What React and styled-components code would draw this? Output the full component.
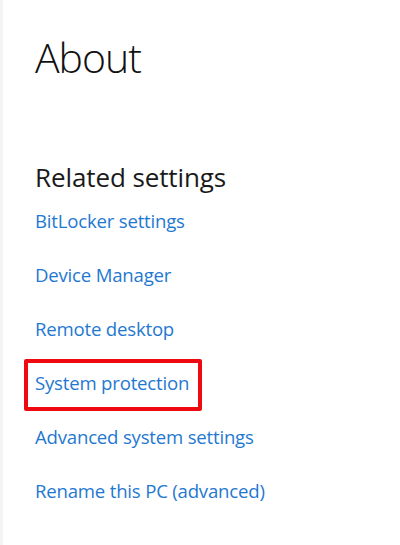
import React from "react";
import styled, { createGlobalStyle } from "styled-components";

const Global = createGlobalStyle`
  html, body { margin: 0; padding: 0; background: #ffffff; }
  body { font-family: "Open Sans", "Noto Sans", sans-serif; }
`;

const Page = styled.div`
  width: 400px;
  height: 545px;
  box-sizing: border-box;
  background: #ffffff;
  border-left: 3px solid #f4f4f2;
  padding: 31px 0 0 32px;
  display: flex;
  flex-direction: column;
`;

const Title = styled.h1`
  margin: 0;
  font-weight: 300;
  font-size: 41px;
  line-height: 52px;
  color: #111111;
  letter-spacing: -1px;
`;

const Section = styled.section`
  margin-top: 79px;
  display: flex;
  flex-direction: column;
`;

const SectionTitle = styled.h2`
  margin: 0;
  font-weight: 400;
  font-size: 26px;
  line-height: 30px;
  color: #1a1a1a;
  letter-spacing: -0.1px;
`;

const LinkList = styled.ul`
  list-style: none;
  margin: 17px 0 0 0;
  padding: 0;
  display: flex;
  flex-direction: column;
  gap: 30px;
`;

const LinkItem = styled.li`
  position: relative;
  height: 24px;
  display: flex;
  align-items: center;
`;

const Link = styled.a`
  font-size: 18.6px;
  font-weight: 400;
  color: #1f78d1;
  text-decoration: none;
  letter-spacing: -0.2px;
  line-height: 24px;
`;

const Highlight = styled.span`
  position: absolute;
  left: -11px;
  top: -12px;
  width: 178px;
  height: 52px;
  box-sizing: border-box;
  border: 4px solid #ee0a10;
  border-radius: 2px;
  pointer-events: none;
`;

const links = [
  { text: "BitLocker settings" },
  { text: "Device Manager" },
  { text: "Remote desktop" },
  { text: "System protection", highlighted: true },
  { text: "Advanced system settings" },
  { text: "Rename this PC (advanced)" },
];

export default function App() {
  return (
    <>
      <Global />
      <Page>
        <Title>About</Title>
        <Section>
          <SectionTitle>Related settings</SectionTitle>
          <LinkList>
            {links.map((l) => (
              <LinkItem key={l.text}>
                <Link href="#">{l.text}</Link>
                {l.highlighted && <Highlight />}
              </LinkItem>
            ))}
          </LinkList>
        </Section>
      </Page>
    </>
  );
}
